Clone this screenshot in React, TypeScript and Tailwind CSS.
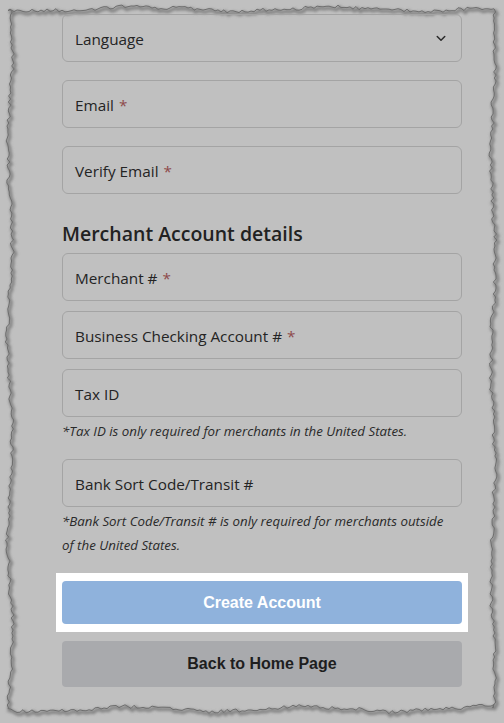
import React from 'react';

type Field = { label: string; required?: boolean; help?: string[] };

const accountFields: Field[] = [
  { label: 'Email', required: true },
  { label: 'Verify Email', required: true },
];

const merchantFields: Field[] = [
  { label: 'Merchant #', required: true },
  { label: 'Business Checking Account #', required: true },
  { label: 'Tax ID', help: ['*Tax ID is only required for merchants in the United States.'] },
  {
    label: 'Bank Sort Code/Transit #',
    help: ['*Bank Sort Code/Transit # is only required for merchants outside', 'of the United States.'],
  },
];

// jagged "torn paper" outline, seeded so it is the same every run
function tornPath(): string {
  let seed = 11;
  const rnd = () => {
    seed = (seed * 1103515245 + 12345) % 2147483648;
    return seed / 2147483648;
  };
  const j = (a: number) => (rnd() - 0.5) * a;
  const pts: [number, number][] = [];
  const step = 3;
  for (let x = 8; x <= 494; x += step) pts.push([x, 9 + j(3.5) + Math.sin(x / 30) * 2 + Math.sin(x / 11) * 0.6]);
  for (let y = 9; y <= 708; y += step) pts.push([493 + j(3.5) + Math.sin(y / 33) * 2 + Math.sin(y / 9) * 0.6, y]);
  for (let x = 494; x >= 8; x -= step) pts.push([x, 709 + j(3.5) + Math.sin(x / 28) * 2.5 + Math.sin(x / 10) * 0.6]);
  for (let y = 708; y >= 9; y -= step) pts.push([10 + j(3.5) + Math.sin(y / 31) * 2.5 + Math.sin(y / 8) * 0.6, y]);
  return 'M' + pts.map(([x, y]) => `${x.toFixed(1)} ${y.toFixed(1)}`).join(' L') + ' Z';
}

const Input: React.FC<{ field: Field }> = ({ field }) => (
  <div className="flex h-12 items-center rounded-md border border-[#a4a4a4] px-3 pt-[3px] text-[15.3px] text-[#242424]">
    {field.label}
    {field.required && <span className="ml-[5px] text-[#8e4a4a]">*</span>}
  </div>
);

const App: React.FC = () => {
  const d = tornPath();
  return (
    <div
      className="relative h-[723px] w-[504px] overflow-hidden bg-[#c0c0c0]"
      style={{ fontFamily: '"Open Sans", "Noto Sans", sans-serif' }}
    >
      <svg className="pointer-events-none absolute inset-0" width="504" height="723">
        <defs>
          <filter id="blur" x="-5%" y="-5%" width="110%" height="110%">
            <feGaussianBlur stdDeviation="1.6" />
          </filter>
        </defs>
        <path d={d} transform="translate(1.5 2)" fill="none" stroke="#7c7c7c" strokeWidth="3" filter="url(#blur)" />
        <path d={d} fill="none" stroke="#6e6e6e" strokeWidth="1" />
      </svg>

      <div className="relative flex flex-col pl-[62px] pr-[42px] pt-[14px]">
        <div className="flex h-12 items-center justify-between rounded-md border border-[#a4a4a4] px-3 pt-[3px] text-[15.3px] text-[#242424]">
          <span>Language</span>
          <svg width="12" height="12" viewBox="0 0 16 16" className="mr-[2px] mb-[4px]">
            <path d="M3 6l5 5 5-5" fill="none" stroke="#2a2a2a" strokeWidth="2" strokeLinecap="round" strokeLinejoin="round" />
          </svg>
        </div>

        {accountFields.map((f) => (
          <div key={f.label} className="mt-[18px]">
            <Input field={f} />
          </div>
        ))}

        <h2 className="mt-[25px] mb-[4px] text-[19.5px] font-semibold leading-[30px] text-[#222]">
          Merchant Account details
        </h2>

        {merchantFields.map((f, i) => (
          <div key={f.label} className={i === 0 ? '' : i === 3 ? 'mt-[16px]' : 'mt-[10px]'}>
            <Input field={f} />
            {f.help && (
              <p className="mt-[2px] text-[13.3px] italic leading-[24px] text-[#2a2a2a]">
                {f.help.map((line) => (
                  <span key={line} className="block">
                    {line}
                  </span>
                ))}
              </p>
            )}
          </div>
        ))}

        <div
          className="mt-[16px] -mx-[6px] bg-white px-[6px] py-[8px]"
          style={{ fontFamily: '"Liberation Sans", Arial, sans-serif' }}
        >
          <button className="flex h-[43px] w-full items-center justify-center rounded-[4px] bg-[#8fb2dc] text-[16px] font-bold text-white">
            Create Account
          </button>
        </div>
        <button
          className="mt-[9px] flex h-[46px] w-full items-center justify-center rounded-[4px] bg-[#a9aaad] text-[16px] font-bold text-[#1e1e1e]"
          style={{ fontFamily: '"Liberation Sans", Arial, sans-serif' }}
        >
          Back to Home Page
        </button>
      </div>
    </div>
  );
};

export default App;
